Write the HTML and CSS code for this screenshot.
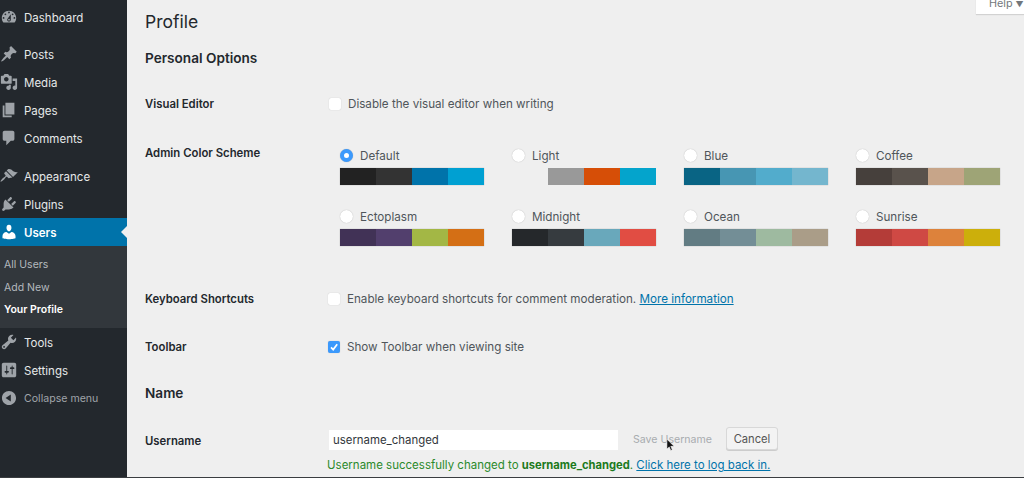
FILE: index.html
```html
<!DOCTYPE html>
<html lang="en">
<head>
<meta charset="utf-8">
<title>Profile</title>
<link rel="stylesheet" href="styles.css">
</head>
<body>
<div class="page">
  <nav class="side">
    <a class="item first"><svg class="ico" viewBox="0 0 20 20"><path d="M3.76 16h12.48c1.1-1.37 1.76-3.11 1.76-5 0-4.42-3.58-8-8-8s-8 3.58-8 8c0 1.89.66 3.63 1.76 5zM10 4c.55 0 1 .45 1 1s-.45 1-1 1-1-.45-1-1 .45-1 1-1zM6 6c.55 0 1 .45 1 1s-.45 1-1 1-1-.45-1-1 .45-1 1-1zm8 0c.55 0 1 .45 1 1s-.45 1-1 1-1-.45-1-1 .45-1 1-1zm-5.37 5.55L12 7v6c0 1.1-.9 2-2 2s-2-.9-2-2c0-.57.24-1.08.63-1.45zM4 10c.55 0 1 .45 1 1s-.45 1-1 1-1-.45-1-1 .45-1 1-1zm12 0c.55 0 1 .45 1 1s-.45 1-1 1-1-.45-1-1 .45-1 1-1zm-5 3c0-.55-.45-1-1-1s-1 .45-1 1 .45 1 1 1 1-.45 1-1z" fill-rule="evenodd"/></svg>Dashboard</a>
    <a class="item group"><svg class="ico" viewBox="0 0 20 20"><path d="M10.44 3.02l1.82-1.82 6.36 6.35-1.83 1.82c-1.05-.68-2.48-.57-3.41.36l-.75.75c-.92.93-1.04 2.35-.35 3.41l-1.83 1.82-2.41-2.41-2.8 2.79c-.42.42-3.38 2.71-3.8 2.29s1.86-3.39 2.28-3.81l2.79-2.79L4.1 9.36l1.83-1.82c1.05.69 2.48.57 3.4-.36l.75-.75c.93-.92 1.05-2.35.36-3.41z"/></svg>Posts</a>
    <a class="item"><svg class="ico" viewBox="0 0 20 20"><path d="M13 11V4c0-.55-.45-1-1-1h-1.67L9 1H5L3.67 3H2c-.55 0-1 .45-1 1v7c0 .55.45 1 1 1h10c.55 0 1-.45 1-1zM7 4.500c1.38 0 2.500 1.120 2.500 2.500S8.380 9.500 7 9.500 4.500 8.380 4.500 7 5.620 4.500 7 4.500zM14 6h5v10.500c0 1.380-1.120 2.500-2.500 2.500S14 17.880 14 16.500s1.120-2.500 2.500-2.500c.17 0 .34.02.5.05V9h-3V6zm-4 8.050V13h2v3.500c0 1.380-1.120 2.500-2.500 2.500S7 17.880 7 16.500 8.120 14 9.500 14c.17 0 .34.02.5.05z" fill-rule="evenodd"/></svg>Media</a>
    <a class="item"><svg class="ico" viewBox="0 0 20 20"><path d="M6 15V2h10v13H6zm-1 1h8v2H3V5h2v11z"/></svg>Pages</a>
    <a class="item"><svg class="ico" viewBox="0 0 20 20"><path d="M5 2h9c1.100 0 2 .9 2 2v7c0 1.100-.9 2-2 2h-2l-5 5v-5H5c-1.100 0-2-.9-2-2V4c0-1.100.9-2 2-2z"/></svg>Comments</a>
    <a class="item group2"><svg class="ico" viewBox="0 0 20 20"><path d="M14.48 11.06L7.41 3.990l1.500-1.500c.5-.56 2.300-.47 3.510.32 1.210.8 1.430 1.280 2.910 2.100 1.180.64 2.450 1.260 4.450.85zm-.71.71L6.700 4.700 4.930 6.470c-.39.39-.39 1.020 0 1.410l1.060 1.060c.39.39.39 1.030 0 1.420-.6.6-1.430 1.110-2.210 1.690-.35.26-.7.53-1.010.84-1.430 1.430-2.400 3.030-2.040 3.400.37.36 1.970-.61 3.400-2.040.31-.31.58-.66.84-1.010.58-.78 1.090-1.610 1.690-2.210.39-.39 1.030-.39 1.420 0l1.060 1.060c.39.39 1.020.39 1.410 0z"/></svg>Appearance</a>
    <a class="item"><svg class="ico" viewBox="0 0 20 20"><path d="M13.110 4.360L9.870 7.600 8 5.730l3.240-3.240c.35-.34 1.050-.2 1.560.32.52.51.66 1.210.31 1.550zm-8 1.770l.91-1.120 9.010 9.010-1.190.84c-.71.71-2.630 1.160-3.820 1.160H6.140L4.900 17.260c-.59.59-1.540.59-2.120 0-.59-.58-.59-1.530 0-2.120l1.240-1.240v-3.880c0-1.130.4-3.190 1.090-3.890zm7.260 3.970l3.240-3.240c.34-.35 1.040-.21 1.550.31.52.51.66 1.210.31 1.550l-3.240 3.250z"/></svg>Plugins</a>
    <a class="item current"><svg class="ico" viewBox="0 0 20 20"><path d="M10 9.250c-2.270 0-2.730-3.440-2.730-3.440C7 4.020 7.820 2 9.970 2c2.160 0 2.980 2.020 2.710 3.810 0 0-.41 3.440-2.680 3.440zm0 2.570L12.720 10c2.390 0 4.520 2.330 4.520 4.530v2.490s-3.650 1.130-7.240 1.130c-3.650 0-7.240-1.130-7.240-1.130v-2.490c0-2.250 1.940-4.480 4.470-4.480z"/></svg>Users</a>
    <div class="sub">
      <a class="subitem">All Users</a>
      <a class="subitem">Add New</a>
      <a class="subitem active">Your Profile</a>
    </div>
    <a class="item"><svg class="ico" viewBox="0 0 20 20"><path d="M16.680 9.770c-1.340 1.340-3.300 1.670-4.950.99l-5.410 6.520c-.99.99-2.590.99-3.580 0s-.99-2.590 0-3.570l6.520-5.420c-.68-1.650-.35-3.610.99-4.950 1.280-1.280 3.120-1.620 4.720-1.060l-2.890 2.890 2.820 2.820 2.860-2.870c.53 1.580.18 3.390-1.080 4.650zM3.810 16.210c.4.39 1.040.39 1.430 0 .4-.4.4-1.040 0-1.430-.39-.4-1.030-.4-1.430 0-.39.39-.39 1.030 0 1.430z" fill-rule="evenodd"/></svg>Tools</a>
    <a class="item"><svg class="ico" viewBox="0 0 20 20"><path d="M18 16V4c0-1.100-.9-2-2-2H4c-1.100 0-2 .9-2 2v12c0 1.100.9 2 2 2h12c1.100 0 2-.9 2-2zM8 11h1c.55 0 1 .45 1 1s-.45 1-1 1H8v1.500c0 .28-.22.5-.5.5s-.5-.22-.5-.5V13H6c-.55 0-1-.45-1-1s.45-1 1-1h1V5.500c0-.28.22-.5.5-.5s.5.22.5.5V11zm5-2h-1c-.55 0-1-.45-1-1s.45-1 1-1h1V5.500c0-.28.22-.5.5-.5s.5.22.5.5V7h1c.55 0 1 .45 1 1s-.45 1-1 1h-1v5.500c0 .28-.22.5-.5.5s-.5-.22-.5-.5V9z" fill-rule="evenodd"/></svg>Settings</a>
    <a class="item collapse"><svg class="ico" viewBox="0 0 20 20"><path d="M10 2.160c4.330 0 7.840 3.510 7.840 7.840s-3.510 7.840-7.840 7.840S2.160 14.330 2.160 10 5.710 2.160 10 2.160zm2 11.720V6.120L6.180 9.970z" fill-rule="evenodd"/></svg>Collapse menu</a>
  </nav>
  <main class="main">
    <div class="help">Help <span class="caret">▼</span></div>
    <h1 class="title">Profile</h1>
    <h2 class="section s-personal">Personal Options</h2>
    <div class="row r-editor">
      <div class="label">Visual Editor</div>
      <label class="check"><span class="box"></span><span>Disable the visual editor when writing</span></label>
    </div>
    <div class="row r-scheme">
      <div class="label">Admin Color Scheme</div>
      <div class="schemes">
        <div class="scheme"><div class="sname"><span class="radio on"></span>Default</div><div class="swatches"><i class="sw c1a"></i><i class="sw c1b"></i><i class="sw c1c"></i><i class="sw c1d"></i></div></div>
        <div class="scheme"><div class="sname"><span class="radio"></span>Light</div><div class="swatches plain"><i class="sw c2a"></i><i class="sw c2b"></i><i class="sw c2c"></i><i class="sw c2d"></i></div></div>
        <div class="scheme"><div class="sname"><span class="radio"></span>Blue</div><div class="swatches"><i class="sw c3a"></i><i class="sw c3b"></i><i class="sw c3c"></i><i class="sw c3d"></i></div></div>
        <div class="scheme"><div class="sname"><span class="radio"></span>Coffee</div><div class="swatches"><i class="sw c4a"></i><i class="sw c4b"></i><i class="sw c4c"></i><i class="sw c4d"></i></div></div>
        <div class="scheme"><div class="sname"><span class="radio"></span>Ectoplasm</div><div class="swatches"><i class="sw c5a"></i><i class="sw c5b"></i><i class="sw c5c"></i><i class="sw c5d"></i></div></div>
        <div class="scheme"><div class="sname"><span class="radio"></span>Midnight</div><div class="swatches"><i class="sw c6a"></i><i class="sw c6b"></i><i class="sw c6c"></i><i class="sw c6d"></i></div></div>
        <div class="scheme"><div class="sname"><span class="radio"></span>Ocean</div><div class="swatches"><i class="sw c7a"></i><i class="sw c7b"></i><i class="sw c7c"></i><i class="sw c7d"></i></div></div>
        <div class="scheme"><div class="sname"><span class="radio"></span>Sunrise</div><div class="swatches"><i class="sw c8a"></i><i class="sw c8b"></i><i class="sw c8c"></i><i class="sw c8d"></i></div></div>
      </div>
    </div>
    <div class="row r-keys">
      <div class="label">Keyboard Shortcuts</div>
      <label class="check shifted"><span class="box"></span><span>Enable keyboard shortcuts for comment moderation. <a class="link">More information</a></span></label>
    </div>
    <div class="row r-toolbar">
      <div class="label">Toolbar</div>
      <label class="check shifted"><span class="box on"><svg viewBox="0 0 12 12"><path d="M3 6.300l2.200 2.300L9.200 3.200" fill="none" stroke="#fff" stroke-width="1.700"/></svg></span><span>Show Toolbar when viewing site</span></label>
    </div>
    <h2 class="section s-name">Name</h2>
    <div class="row r-user">
      <div class="label">Username</div>
      <div class="usercol">
        <div class="useractions">
          <div class="field">username_changed</div>
          <span class="save">Save Username</span>
          <span class="cancel">Cancel</span>
          <svg class="cursor" viewBox="0 0 10 15"><path d="M1 1v11l2.600-2.400 1.700 4 1.700-.8-1.700-3.800H9z" fill="#111" stroke="#fff" stroke-width=".6"/></svg>
        </div>
        <p class="msg">Username successfully changed to <b>username_changed</b>. <a class="link">Click here to log back in.</a></p>
      </div>
    </div>
  </main>
</div>
</body>
</html>
```
FILE: styles.css
```css
* { box-sizing: border-box; }
html, body { margin: 0; height: 100%; overflow: hidden; }
body {
  background: #efefef;
  color: #50565b;
  font-family: Inter, "Liberation Sans", sans-serif;
  font-size: 11.65px;
  line-height: 20px;
}
.page {
  display: flex;
  height: 478px;
  border-bottom: 1px solid #3a3d40;
  overflow: hidden;
}
.side {
  flex: none;
  width: 127px;
  background: #23282d;
  padding-top: 3px;
  color: #eef0f1;
}
.item {
  display: flex;
  align-items: center;
  gap: 6px;
  height: 28px;
  padding-top: 1px;
  color: #e6e8e9;
  font-size: 11.5px;
}
.item .ico { margin-top: -1px; }
.item.group { margin-top: 9px; }
.item.group2 { margin-top: 10px; }
.ico { flex: none; width: 18px; height: 18px; fill: #9ea3a8; }
.item.current {
  position: relative;
  background: #0073aa;
  color: #fff;
  font-weight: 600;
}
.item.current .ico { fill: #fff; }
.item.current::after {
  content: "";
  position: absolute;
  right: 0;
  top: 8px;
  border: 6px solid transparent;
  border-right-color: #efefef;
  border-left-width: 0;
}
.sub {
  background: #32373c;
  height: 82px;
  padding-top: 9px;
  display: flex;
  flex-direction: column;
  gap: 2.5px;
}
.subitem {
  padding-left: 4px;
  font-size: 10.5px;
  color: #b4b9be;
}
.subitem.active { color: #fff; font-weight: 600; }
.item.collapse { color: #a0a5aa; font-size: 10.6px; }
.main {
  position: relative;
  flex: 1;
  min-width: 0;
  padding: 6px 0 0 18px;
}
.help {
  position: absolute;
  right: 0;
  top: -6px;
  width: 48px;
  height: 20px;
  background: #fff;
  box-shadow: 0 1px 1px rgba(0,0,0,.12);
  color: #72777c;
  font-size: 10.8px;
  padding-left: 13px;
  white-space: nowrap;
  overflow: hidden;
}
.caret { font-size: 8px; }
.title {
  margin: 0;
  font-size: 17.5px;
  line-height: 32px;
  font-weight: 400;
  color: #23282d;
}
.section {
  margin: 0;
  font-size: 13.6px;
  line-height: 20px;
  font-weight: 600;
  color: #23282d;
}
.s-personal { margin-top: 10px; }
.s-name { margin-top: 26px; }
.row {
  display: grid;
  grid-template-columns: 184px 1fr;
}
.r-editor { margin-top: 25px; }
.r-scheme { margin-top: 28px; }
.r-keys { margin-top: 42px; }
.r-toolbar { margin-top: 27px; }
.r-user { margin-top: 27px; }
.label {
  font-size: 11.35px;
  font-weight: 600;
  color: #23282d;
  padding-top: 1px;
}
.check { display: flex; align-items: center; gap: 7px; height: 20px; padding-top: 1px; }
.check.shifted { margin-left: -1px; }
.box {
  flex: none;
  width: 12px;
  height: 12px;
  background: #fff;
  border-radius: 2px;
  box-shadow: 0 0 1px rgba(0,0,0,.25);
}
.box svg { display: block; width: 12px; height: 12px; }
.box.on { background: #3b99fc; }
.link { color: #0073aa; text-decoration: underline; }
.schemes {
  display: grid;
  grid-template-columns: repeat(4, 172px);
  row-gap: 21px;
  margin: 3px 0 0 11px;
}
.sname { display: flex; align-items: center; gap: 7px; height: 20px; padding-top: 1px; }
.radio {
  flex: none;
  width: 13px;
  height: 13px;
  margin-top: -1px;
  border-radius: 50%;
  background: #fff;
  box-shadow: 0 0 1px rgba(0,0,0,.3);
}
.radio.on {
  background: #fff;
  border: 4px solid #3b99fc;
}
.swatches {
  display: flex;
  width: 144px;
  margin-top: 3px;
  box-shadow: 0 0 1px rgba(0,0,0,.3);
}
.swatches.plain { box-shadow: none; }
.sw { flex: 1; height: 17px; }
.c1a { background: #222; } .c1b { background: #333; } .c1c { background: #0073aa; } .c1d { background: #00a0d2; }
.c2a { background: #efefef; } .c2b { background: #999; } .c2c { background: #d64e07; } .c2d { background: #04a4cc; }
.c3a { background: #096484; } .c3b { background: #4796b3; } .c3c { background: #52accc; } .c3d { background: #74b6ce; }
.c4a { background: #46403c; } .c4b { background: #59524c; } .c4c { background: #c7a589; } .c4d { background: #9ea476; }
.c5a { background: #413256; } .c5b { background: #523f6d; } .c5c { background: #a3b745; } .c5d { background: #d46f15; }
.c6a { background: #25282b; } .c6b { background: #363b3f; } .c6c { background: #69a8bb; } .c6d { background: #e14d43; }
.c7a { background: #627c83; } .c7b { background: #738e96; } .c7c { background: #9ebaa0; } .c7d { background: #aa9d88; }
.c8a { background: #b43c38; } .c8b { background: #cf4944; } .c8c { background: #dd823b; } .c8d { background: #ccaf0b; }
.useractions { display: flex; align-items: center; position: relative; height: 20px; }
.field {
  width: 289px;
  height: 20px;
  background: #fff;
  padding-left: 4px;
  color: #32373c;
  font-size: 11.4px;
}
.save { margin-left: 15px; color: #a8acb0; font-size: 10.6px; }
.cancel {
  margin-left: 14px;
  width: 52px;
  height: 23px;
  margin-top: -3px;
  line-height: 22px;
  text-align: center;
  background: #f3f3f3;
  border: 1px solid #d8d8d8;
  border-radius: 3px;
  box-shadow: 0 1px 0 #ccc;
  color: #555;
  font-size: 11.2px;
}
.cursor { position: absolute; left: 337px; top: 8px; width: 9px; height: 14px; }
.msg { margin: 5px 0 0 -2px; color: #2b8a2b; white-space: nowrap; font-size: 11.5px; }
.msg b { color: #1c7a1c; font-weight: 700; font-size: 11.2px; }
```
